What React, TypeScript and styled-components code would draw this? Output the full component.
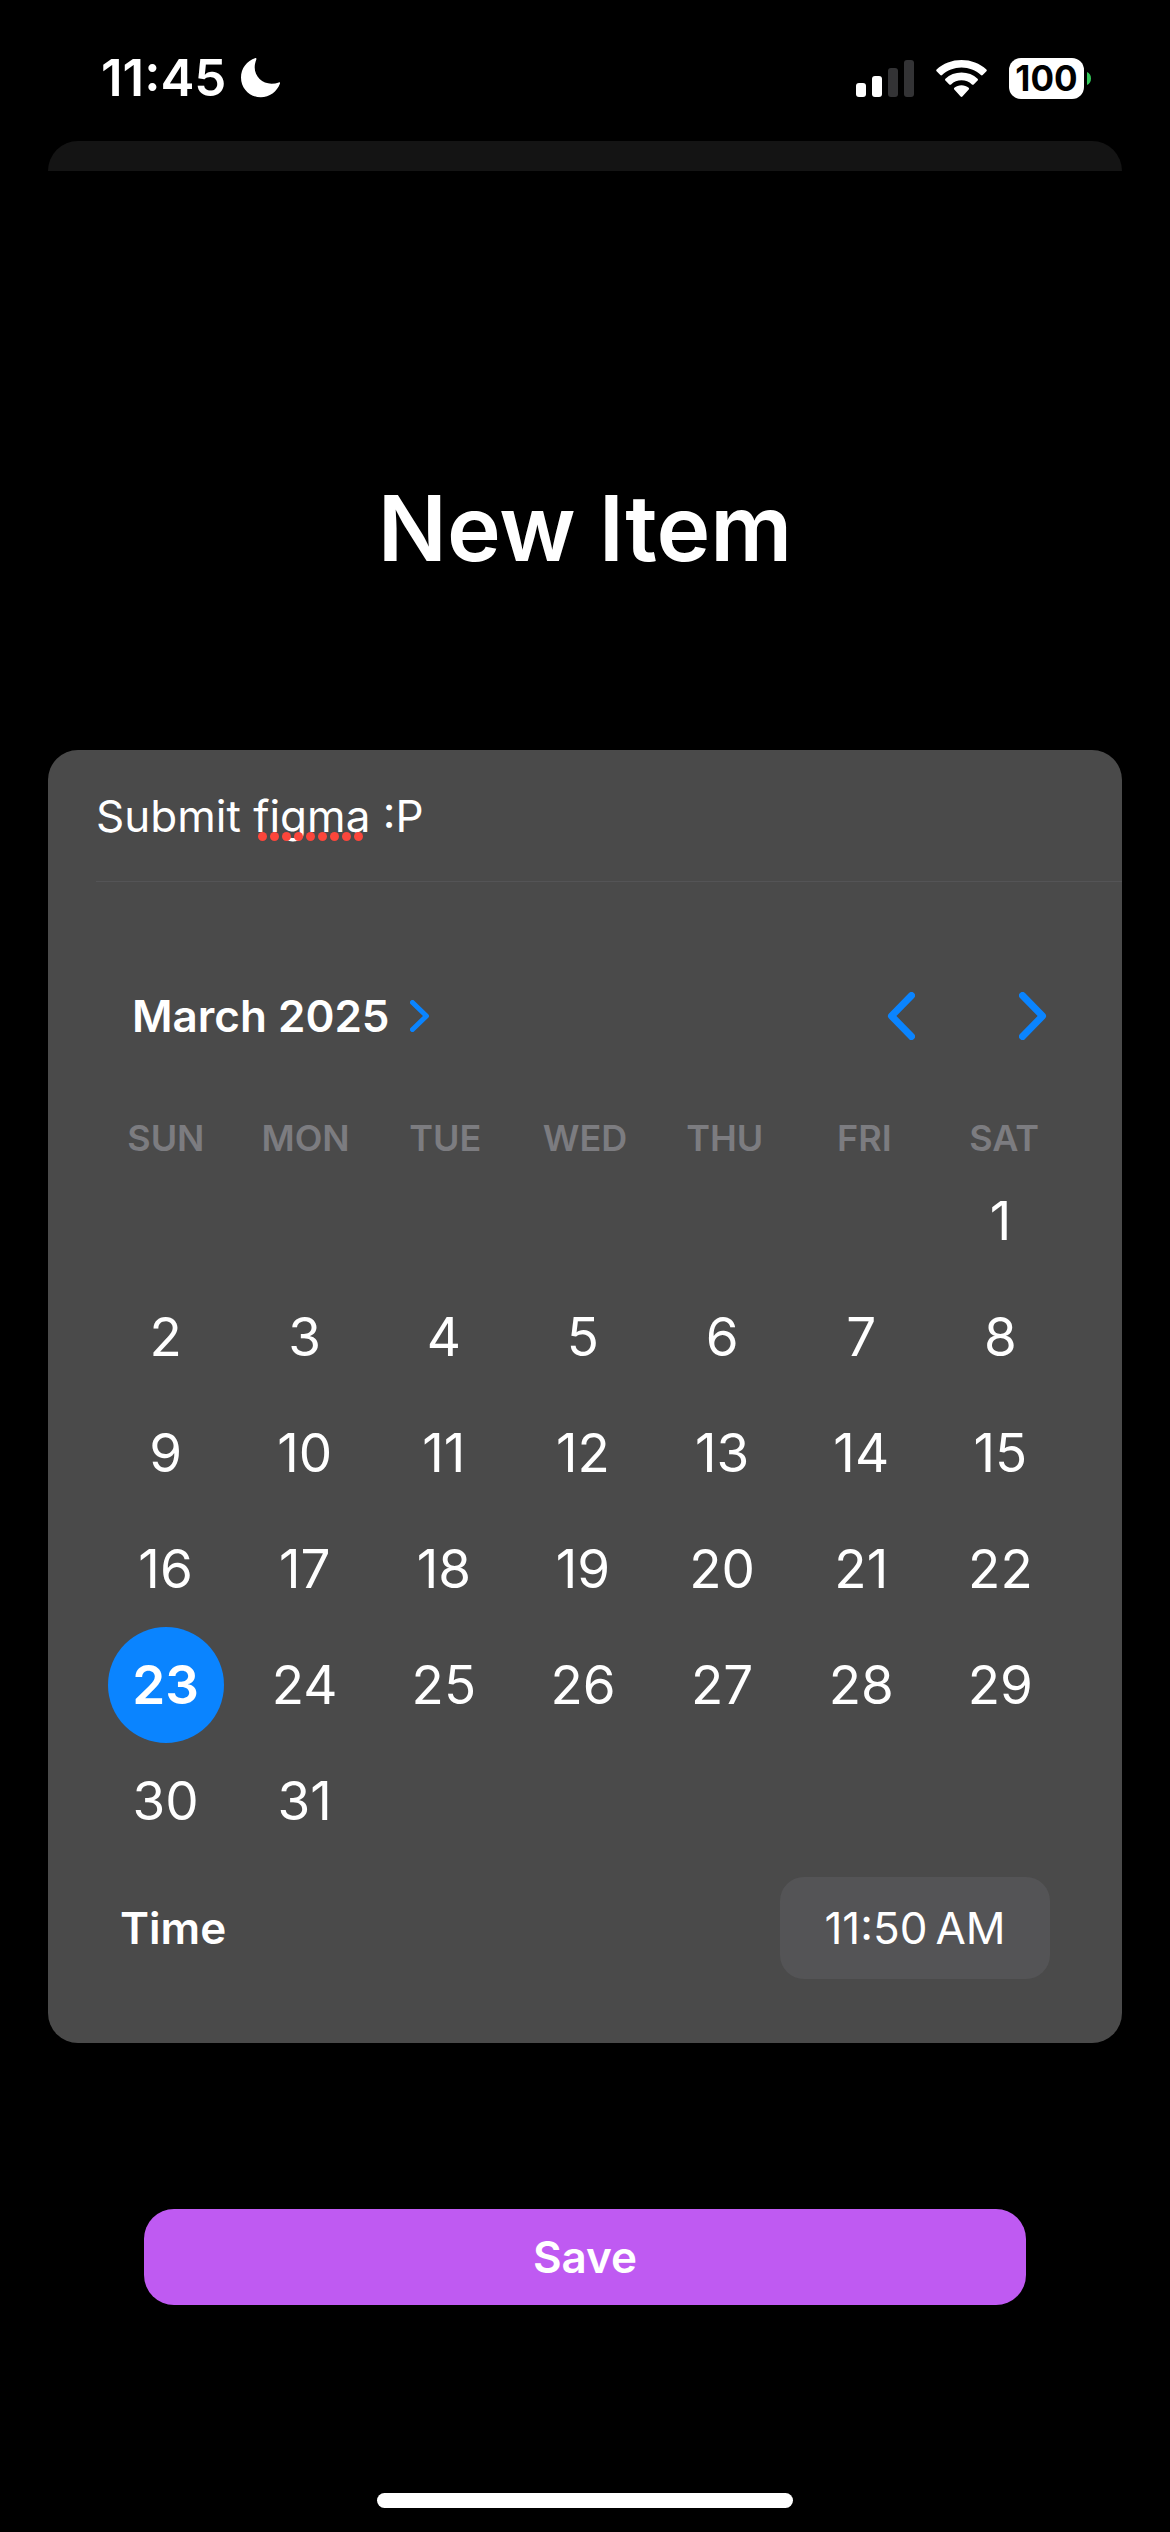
import React, { useState } from "react";
import styled, { createGlobalStyle } from "styled-components";

const GlobalStyle = createGlobalStyle`
  *, *::before, *::after {
    box-sizing: border-box;
  }
  body {
    margin: 0;
    background: #000;
    color: #fff;
    font-family: Inter, "Liberation Sans", sans-serif;
  }
  button, input {
    margin: 0;
    padding: 0;
    border: 0;
    background: none;
    color: inherit;
    font: inherit;
  }
  button {
    cursor: pointer;
  }
  svg {
    display: block;
  }
`;

const Screen = styled.div`
  display: flex;
  flex-direction: column;
  min-height: 100vh;
  background: #000;
`;

const StatusBar = styled.header`
  display: flex;
  align-items: center;
  justify-content: space-between;
  height: 141px;
  padding: 15px 79px 0 101px;
`;

const StatusGroup = styled.div<{ $gap: number }>`
  display: flex;
  align-items: center;
  gap: ${(p) => p.$gap}px;
`;

const Clock = styled.time`
  font-size: 51px;
  font-weight: 600;
  line-height: 60px;
`;

const Battery = styled.div`
  display: flex;
  align-items: center;
  gap: 3px;
`;

const BatteryBody = styled.span`
  display: flex;
  align-items: center;
  justify-content: center;
  width: 75px;
  height: 41px;
  border-radius: 12px;
  background: #fff;
  color: #000;
  font-size: 35px;
  font-weight: 700;
`;

const SheetBehind = styled.div`
  height: 30px;
  margin: 0 48px;
  border-radius: 30px 30px 0 0;
  background: #141414;
`;

const Sheet = styled.main`
  display: flex;
  flex: 1;
  flex-direction: column;
  padding: 297px 48px 0;
`;

const Title = styled.h1`
  margin: 0;
  font-size: 91px;
  font-weight: 600;
  line-height: 120px;
  text-align: center;
`;

const Card = styled.form`
  margin-top: 162px;
  border-radius: 30px;
  background: #4a4a4a;
`;

const Field = styled.div`
  position: relative;
  margin-left: 48px;
  border-bottom: 1px solid #545456;
`;

const TitleInput = styled.input`
  display: block;
  width: 100%;
  height: 131px;
  outline: none;
  font-size: 44px;
`;

const SpellingDots = styled.svg`
  position: absolute;
  top: 82px;
  left: 162px;
`;

const Picker = styled.section`
  padding: 72px 48px 64px;
`;

const MonthBar = styled.div`
  display: flex;
  align-items: center;
  justify-content: space-between;
  height: 124px;
  padding: 0 27px 0 36px;
`;

const MonthButton = styled.button`
  display: flex;
  align-items: center;
  gap: 20px;
  font-size: 44px;
  font-weight: 600;
`;

const MonthArrows = styled.div`
  display: flex;
  gap: 104px;
`;

const ArrowButton = styled.button`
  color: #0a84ff;
`;

const Week = styled.div`
  display: grid;
  grid-template-columns: repeat(7, 1fr);
  align-items: center;
  justify-items: center;
`;

const Weekdays = styled(Week)`
  height: 85px;
  padding-top: 35px;
  color: #7c7c80;
  font-size: 36px;
  font-weight: 600;
  line-height: 50px;
`;

const Days = styled(Week)`
  grid-auto-rows: 116px;
  padding-right: 4px;
`;

const Day = styled.button<{ $selected: boolean; $column: number }>`
  grid-column: ${(p) => p.$column};
  width: 116px;
  height: 116px;
  border-radius: 50%;
  background: ${(p) => (p.$selected ? "#0a84ff" : "transparent")};
  font-size: 53px;
  font-weight: ${(p) => (p.$selected ? 600 : 400)};
`;

const TimeRow = styled.div`
  display: flex;
  align-items: center;
  justify-content: space-between;
  margin-top: 18px;
  padding: 0 24px;
  font-size: 44px;
`;

const TimeLabel = styled.span`
  font-weight: 600;
`;

const TimeButton = styled.button`
  width: 270px;
  height: 102px;
  border-radius: 24px;
  background: #545456;
`;

const SaveButton = styled.button`
  height: 96px;
  margin: 166px 96px 0;
  border-radius: 30px;
  background: #bf5af2;
  font-size: 44px;
  font-weight: 600;
`;

const HomeIndicator = styled.div`
  width: 416px;
  height: 15px;
  margin: 48px auto 24px;
  border-radius: 8px;
  background: #fff;
`;

const MoonIcon = () => (
  <svg width="40" height="40" viewBox="0 0 40 40" fill="#fff" aria-hidden="true">
    <path d="M14.5 0C5.8 2.8 0 10.5 0 19.5 0 30.5 8.8 39.3 19.8 39.3c8.7 0 16.2-5.8 19.2-13.8.4-.9-.4-1.5-1.2-1-2.3.8-4.8 1.2-7.3 1.2-9.2 0-16.8-7.2-16.8-16.2 0-2.5.6-5.5 1.6-7.9C15.7.7 15.2 0 14.5 0Z" />
  </svg>
);

const SignalIcon = () => (
  <svg width="58" height="37" viewBox="0 0 58 37" aria-hidden="true">
    <rect x="0" y="23" width="10" height="14" rx="3" fill="#fff" />
    <rect x="16" y="16" width="10" height="21" rx="3" fill="#fff" />
    <rect x="32" y="8" width="10" height="29" rx="3" fill="#333335" />
    <rect x="48" y="0" width="10" height="37" rx="3" fill="#333335" />
  </svg>
);

const WifiIcon = () => (
  <svg width="51" height="37" viewBox="0 0 51 37" fill="#fff" aria-hidden="true">
    <path d="M25.5 7.6c7.4 0 14.2 2.8 19.4 7.4.5.5 1.3.5 1.8 0l3.7-3.8c.5-.5.5-1.3 0-1.8C43.8 3.4 35 0 25.5 0S7.2 3.4.6 9.4c-.5.5-.5 1.3 0 1.8L4.3 15c.5.5 1.3.5 1.8 0C11.3 10.4 18.1 7.6 25.5 7.6Z" />
    <path d="M25.5 20.3c3.900 0 7.600 1.500 10.400 4.100.5.5 1.300.5 1.800 0l3.900-3.900c.5-.5.5-1.300 0-1.800-4.300-4-9.900-6.200-16.100-6.200s-11.800 2.200-16.100 6.200c-.5.5-.5 1.300 0 1.800l3.900 3.900c.5.5 1.300.5 1.800 0 2.800-2.600 6.500-4.100 10.400-4.100Z" />
    <path d="M32.7 27.8c.5.5.5 1.300 0 1.800l-6.300 6.900c-.5.5-1.300.5-1.800 0l-6.300-6.900c-.5-.5-.5-1.300 0-1.800 2-1.600 4.500-2.600 7.200-2.600s5.200 1 7.200 2.600Z" />
  </svg>
);

const BatteryTip = () => (
  <svg width="4" height="13" viewBox="0 0 4 13" fill="#34c759" aria-hidden="true">
    <path d="M0 0c2.500 1 4 3.500 4 6.500S2.500 12 0 13Z" />
  </svg>
);

type ChevronProps = { direction: "left" | "right"; width: number; height: number; stroke: number };

const Chevron = ({ direction, width, height, stroke }: ChevronProps) => {
  const inset = stroke / 2;
  const near = direction === "right" ? inset : width - inset;
  const tip = direction === "right" ? width - inset - 1 : inset + 1;
  return (
    <svg
      width={width}
      height={height}
      viewBox={`0 0 ${width} ${height}`}
      fill="none"
      stroke="#0a84ff"
      strokeWidth={stroke}
      strokeLinecap="round"
      strokeLinejoin="round"
      aria-hidden="true"
    >
      <path d={`M${near} ${inset}L${tip} ${height / 2}L${near} ${height - inset}`} />
    </svg>
  );
};

const WEEKDAYS = ["SUN", "MON", "TUE", "WED", "THU", "FRI", "SAT"];
const FIRST_WEEKDAY = 6;
const DAYS = Array.from({ length: 31 }, (_, i) => i + 1);
const DOTS = Array.from({ length: 9 }, (_, i) => i);

export default function App() {
  const [title, setTitle] = useState("Submit figma :P");
  const [selected, setSelected] = useState(23);

  return (
    <Screen>
      <GlobalStyle />
      <StatusBar>
        <StatusGroup $gap={15}>
          <Clock>11:45</Clock>
          <MoonIcon />
        </StatusGroup>
        <StatusGroup $gap={22}>
          <SignalIcon />
          <WifiIcon />
          <Battery>
            <BatteryBody>100</BatteryBody>
            <BatteryTip />
          </Battery>
        </StatusGroup>
      </StatusBar>
      <SheetBehind />
      <Sheet>
        <Title>New Item</Title>
        <Card id="new-item" onSubmit={(e) => e.preventDefault()}>
          <Field>
            <TitleInput
              aria-label="Title"
              spellCheck={false}
              value={title}
              onChange={(e) => setTitle(e.target.value)}
            />
            {title.includes("figma") && (
              <SpellingDots width="105" height="9" viewBox="0 0 105 9" fill="#fc463b" aria-hidden="true">
                {DOTS.map((i) => (
                  <circle key={i} cx={4.5 + i * 12} cy="4.5" r="4.5" />
                ))}
              </SpellingDots>
            )}
          </Field>
          <Picker aria-label="Due date">
            <MonthBar>
              <MonthButton type="button">
                March 2025
                <Chevron direction="right" width={20} height={32} stroke={5} />
              </MonthButton>
              <MonthArrows>
                <ArrowButton type="button" aria-label="Previous month">
                  <Chevron direction="left" width={28} height={48} stroke={7} />
                </ArrowButton>
                <ArrowButton type="button" aria-label="Next month">
                  <Chevron direction="right" width={28} height={48} stroke={7} />
                </ArrowButton>
              </MonthArrows>
            </MonthBar>
            <Weekdays>
              {WEEKDAYS.map((name) => (
                <span key={name}>{name}</span>
              ))}
            </Weekdays>
            <Days>
              {DAYS.map((day) => (
                <Day
                  key={day}
                  type="button"
                  $column={((day - 1 + FIRST_WEEKDAY) % 7) + 1}
                  $selected={day === selected}
                  aria-pressed={day === selected}
                  onClick={() => setSelected(day)}
                >
                  {day}
                </Day>
              ))}
            </Days>
            <TimeRow>
              <TimeLabel id="time-label">Time</TimeLabel>
              <TimeButton type="button" aria-describedby="time-label">
                11:50{"\u202f"}AM
              </TimeButton>
            </TimeRow>
          </Picker>
        </Card>
        <SaveButton type="submit" form="new-item">
          Save
        </SaveButton>
      </Sheet>
      <HomeIndicator />
    </Screen>
  );
}
